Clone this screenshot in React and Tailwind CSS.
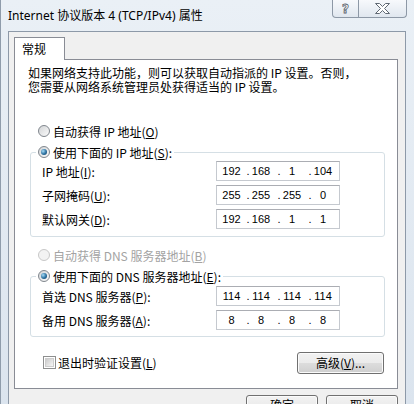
import { Fragment } from 'react'

const FONT = "font-['Noto_Sans_CJK_SC',sans-serif]"

function Acc({ k }) {
  return <span className="underline underline-offset-[1px]">{k}</span>
}

function Radio({ checked, disabled }) {
  return (
    <span
      className={`flex h-[12px] w-[12px] shrink-0 items-center justify-center rounded-full border ${
        disabled
          ? 'border-[#c8c8c8] bg-[#f3f3f3]'
          : 'border-[#80868d] bg-[linear-gradient(135deg,#d2d4d6,#fbfbfb)]'
      }`}
    >
      {checked && (
        <span className="h-[6px] w-[6px] rounded-full bg-[radial-gradient(circle_at_35%_35%,#a6dcf7,#2a6f9f_55%,#133f5f)]" />
      )}
    </span>
  )
}

function CheckBox() {
  return (
    <span className="flex h-[13px] w-[13px] shrink-0 items-center justify-center border border-[#8e8f8f] bg-white">
      <span className="h-[9px] w-[9px] border border-[#cdcdcd] bg-[linear-gradient(135deg,#cbcbcb,#f6f6f6)]" />
    </span>
  )
}

function IpBox({ parts }) {
  return (
    <div className="flex h-[20px] w-[124px] items-center border border-[#c5c9cf] border-t-[#abadb3] bg-white font-['Liberation_Sans',sans-serif] text-[11px] leading-none text-black">
      <span className="w-[29px] text-center">{parts[0]}</span>
      {parts.slice(1).map((p, i) => (
        <Fragment key={i}>
          <span className="w-[4px] text-center">.</span>
          <span className="w-[22px] text-center">{p}</span>
          {i < 2 && <span className="w-[5px]" />}
        </Fragment>
      ))}
    </div>
  )
}

function Row({ label, parts }) {
  return (
    <div className="flex h-[20px] items-center">
      <span className="w-[174px]">{label}</span>
      <IpBox parts={parts} />
    </div>
  )
}

function WinButton({ children, className = '' }) {
  return (
    <div
      className={`flex justify-center rounded-[3px] border border-[#707070] bg-[linear-gradient(#f2f2f2_0%,#ebebeb_50%,#dddddd_50%,#cfcfcf_100%)] shadow-[inset_0_0_0_1px_#fbfbfb] ${className}`}
    >
      {children}
    </div>
  )
}

export default function App() {
  return (
    <div
      className={`flex h-[404px] w-[414px] flex-col overflow-hidden border-l border-[#8f9cab] bg-[linear-gradient(#eaf0f6,#dbe4ee)] text-[12px] leading-[13px] text-black ${FONT}`}
    >
      {/* title bar */}
      <div className="flex h-[31px] shrink-0">
        <div className="self-center pl-[7px] font-['Noto_Sans','Noto_Sans_CJK_SC',sans-serif] text-[12px] leading-[16px]">
          Internet 协议版本 4 (TCP/IPv4) 属性
        </div>
        <div className="ml-auto mr-[7px] flex h-[18px]">
          <div className="flex w-[27px] items-center justify-center rounded-bl-[4px] border border-t-0 border-[#8d98a6] bg-[linear-gradient(#f7f9fc,#e0e7ef)]">
            <span className="font-['DejaVu_Sans',sans-serif] text-[12px] font-bold leading-none text-white [-webkit-text-stroke:0.8px_#59626d]">
              ?
            </span>
          </div>
          <div className="flex w-[48px] items-center justify-center rounded-br-[4px] border border-l-0 border-t-0 border-[#8d98a6] bg-[linear-gradient(#f7f9fc,#e0e7ef)]">
            <svg width="15" height="11" viewBox="-0.5 -0.5 15 11">
              <path
                d="M0 0H4L7 3L10 0H14L9 5L14 10H10L7 7L4 10H0L5 5Z"
                fill="#ffffff"
                stroke="#5f6873"
                strokeWidth="1"
                strokeLinejoin="round"
              />
            </svg>
          </div>
        </div>
      </div>

      {/* client area */}
      <div className="ml-[7px] w-[398px] flex-1 border-x border-t border-[#8d99a8] bg-[#f0f0f0]">
        <div className="ml-[5px] mt-[5px]">
          <div className="relative z-10 -mb-px h-[23px] w-[51px] border border-b-0 border-[#898c95] bg-white pl-[7px] leading-[21px]">
            常规
          </div>
        </div>

        <div className="ml-[5px] h-[330px] w-[384px] border border-[#898c95] bg-white">
          <div className="pl-[15px] pr-[12px]">
            <div className="-ml-[2px] mt-[6px] leading-[14px]">
              <div>如果网络支持此功能，则可以获取自动指派的 IP 设置。否则，</div>
              <div>您需要从网络系统管理员处获得适当的 IP 设置。</div>
            </div>

            <div className="ml-[8px] mt-[29px] flex h-[16px] items-center gap-[3px]">
              <Radio />
              <span>
                自动获得 IP 地址(<Acc k="O" />)
              </span>
            </div>

            <fieldset className="mt-[5px] rounded-[3px] border border-[#d5dfe5]">
              <legend className="ml-[5px] px-[2px]">
                <div className="flex h-[16px] items-center gap-[3px]">
                  <Radio checked />
                  <span>
                    使用下面的 IP 地址(<Acc k="S" />):
                  </span>
                </div>
              </legend>
              <div className="flex flex-col gap-[4px] pb-[7px] pl-[11px] pt-[1px]">
                <Row label={<>IP 地址(<Acc k="I" />):</>} parts={['192', '168', '1', '104']} />
                <Row label={<>子网掩码(<Acc k="U" />):</>} parts={['255', '255', '255', '0']} />
                <Row label={<>默认网关(<Acc k="D" />):</>} parts={['192', '168', '1', '1']} />
              </div>
            </fieldset>

            <div className="ml-[8px] mt-[10px] flex h-[16px] items-center gap-[3px] text-[#a3a3a3]">
              <Radio disabled />
              <span>
                自动获得 DNS 服务器地址(<Acc k="B" />)
              </span>
            </div>

            <fieldset className="mt-[5px] rounded-[3px] border border-[#d5dfe5]">
              <legend className="ml-[5px] px-[2px]">
                <div className="flex h-[16px] items-center gap-[3px]">
                  <Radio checked />
                  <span>
                    使用下面的 DNS 服务器地址(<Acc k="E" />):
                  </span>
                </div>
              </legend>
              <div className="flex flex-col gap-[4px] pb-[6px] pl-[11px] pt-[2px]">
                <Row label={<>首选 DNS 服务器(<Acc k="P" />):</>} parts={['114', '114', '114', '114']} />
                <Row label={<>备用 DNS 服务器(<Acc k="A" />):</>} parts={['8', '8', '8', '8']} />
              </div>
            </fieldset>

            <div className="mt-[14px] flex h-[23px] items-center justify-between pr-[1px]">
              <div className="flex items-center gap-[2px] pl-[13px]">
                <CheckBox />
                <span>
                  退出时验证设置(<Acc k="L" />)
                </span>
              </div>
              <WinButton className="h-[22px] w-[87px] items-center">
                <span>
                  高级(<Acc k="V" />)...
                </span>
              </WinButton>
            </div>
          </div>
        </div>

        <div className="mt-[6px] flex justify-end gap-[8px] pr-[7px]">
          <WinButton className="h-[23px] w-[72px] items-start pt-[2px]">确定</WinButton>
          <WinButton className="h-[23px] w-[72px] items-start pt-[2px]">取消</WinButton>
        </div>
      </div>
    </div>
  )
}
